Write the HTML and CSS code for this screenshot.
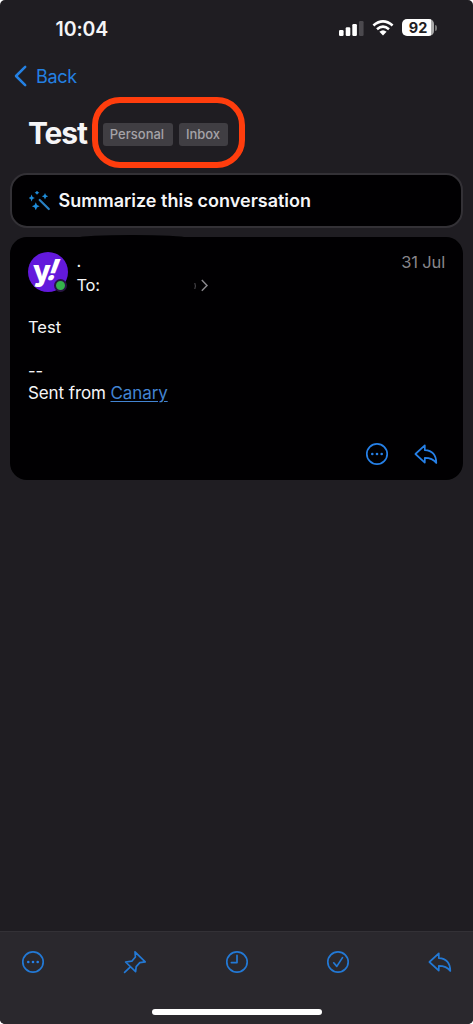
FILE: index.html
```html
<!DOCTYPE html>
<html lang="en">
<head>
<meta charset="utf-8">
<title>Test</title>
<link rel="stylesheet" href="styles.css">
</head>
<body>
<svg class="defs" width="0" height="0">
  <symbol id="more" viewBox="0 0 24 24"><circle cx="12" cy="12" r="10.2"/><g class="dots"><circle cx="7.3" cy="12" r="1.3"/><circle cx="12" cy="12" r="1.3"/><circle cx="16.7" cy="12" r="1.3"/></g></symbol>
  <symbol id="reply" viewBox="0 0 24 24"><path d="M1.4 12 10.8 3.4V8.2C18 8.6 22.2 13 22.3 21C19.5 17.2 16 15.9 10.8 15.9V20.6Z"/></symbol>
  <symbol id="pin" viewBox="0 0 24 24"><path d="M12 1.8 22.2 11.8 16.8 12.6 13.2 16.6 12.6 21.6 2.6 12 8.8 11.2 12.4 7ZM7.4 16.8 1.6 22.4"/></symbol>
  <symbol id="clock" viewBox="0 0 24 24"><circle cx="12" cy="12" r="10.2"/><path d="M12 5.4V12.6H6.4"/></symbol>
  <symbol id="check" viewBox="0 0 24 24"><circle cx="12" cy="12" r="10.2"/><path d="M7.7 12.8 10.8 16.4 16.5 7.6"/></symbol>
</svg>
<div class="phone">
  <header class="status">
    <span class="time">10:04</span>
    <div class="indicators">
      <svg class="signal" width="25" height="16" viewBox="0 0 25 16"><rect x="0" y="10" width="4.6" height="6" rx="1.2"/><rect x="6.7" y="7.3" width="4.6" height="8.7" rx="1.2"/><rect x="13.3" y="4" width="4.6" height="12" rx="1.2"/><rect class="dim" x="20" y="1" width="4.6" height="15" rx="1.2"/></svg>
      <svg class="wifi" width="22" height="16" viewBox="0 0 22 16"><path class="arc" d="M1.4 5.5Q11-2.7 20.6 5.5M5 9.2Q11 4 17 9.2"/><path class="core" d="M7.4 11.7Q11 8.7 14.6 11.7L11 15.4Z"/></svg>
      <div class="battery"><span class="level">92</span><span class="cap"></span></div>
    </div>
  </header>
  <nav class="back">
    <svg width="13" height="22" viewBox="0 0 13 22"><path d="M11.2 1.8 2 11 11.2 20.2"/></svg>
    <span>Back</span>
  </nav>
  <section class="heading">
    <h1>Test</h1>
    <div class="labels"><span class="tag personal">Personal</span><span class="tag inbox">Inbox</span></div>
  </section>
  <button class="summary">
    <svg width="22" height="20" viewBox="0 0 22 20"><path class="wand" d="M10.7 9 19.8 18"/><path class="spark" d="M2.6 3.5 3.6 6 5.8 7 3.6 8 2.6 10.5 1.6 8-.4 7 1.6 6ZM8-.3 9 1 10.4 1.7 9 2.5 8 3.7 7 2.5 5.6 1.7 7 1ZM16 2 17 4.2 19.2 5.2 17 6.2 16 8.4 15 6.2 12.8 5.2 15 4.2ZM6.8 11.2 8 14 10.6 15.2 8 16.4 6.8 19.3 5.6 16.4 2.9 15.2 5.6 14Z"/></svg>
    <span>Summarize this conversation</span>
  </button>
  <article class="message">
    <span class="bump"></span>
    <div class="sender">
      <div class="avatar"><span class="logo-y">y</span><span class="logo-mark">!</span><span class="presence"></span></div>
      <div class="names">
        <span class="from">.</span>
        <div class="to"><span>To:</span><svg width="17" height="13" viewBox="0 0 17 13"><path class="trace" d="M1.8 4Q3 7 1.8 10"/><path d="M8.8 1 14 6.4 8.8 11.8"/></svg></div>
      </div>
      <time>31 Jul</time>
    </div>
    <div class="body"><p>Test</p><p class="sign">--</p><p class="sent">Sent from <a>Canary</a></p></div>
    <div class="actions"><svg class="icon"><use href="#more"/></svg><svg class="icon"><use href="#reply"/></svg></div>
  </article>
  <footer class="toolbar">
    <div class="tools"><svg class="icon"><use href="#more"/></svg><svg class="icon"><use href="#pin"/></svg><svg class="icon"><use href="#clock"/></svg><svg class="icon"><use href="#check"/></svg><svg class="icon"><use href="#reply"/></svg></div>
    <div class="home"></div>
  </footer>
</div>
</body>
</html>
```
FILE: styles.css
```css
* { box-sizing: border-box; }
body { margin: 0; background: #fff; font-family: Inter, "Liberation Sans", sans-serif; color: #f5f5f7; }
svg { display: block; fill: none; flex: none; }
h1, p { margin: 0; }
.defs { position: absolute; }
.phone { width: 473px; height: 1024px; display: flex; flex-direction: column; background: #1f1d22; border-radius: 5px; overflow: hidden; }
.status { height: 56px; display: flex; justify-content: space-between; padding: 0 36px 0 55.5px; }
.time { margin-top: 17px; font-size: 19.5px; line-height: 24px; font-weight: 600; letter-spacing: -.1px; }
.indicators { display: flex; align-items: flex-start; padding-top: 19px; }
.signal { fill: #fff; margin: 1px 8px 0 0; }
.signal .dim { fill: #4b494e; }
.wifi { margin: 1px 8px 0 0; }
.arc { stroke: #fff; stroke-width: 2.6; }
.core { fill: #fff; }
.battery { display: flex; align-items: center; }
.level { width: 32px; height: 17px; border-radius: 5px; background: linear-gradient(90deg, #fff 91%, #aaa 91%); color: #1f1d22; font-size: 14.5px; line-height: 17px; font-weight: 700; text-align: center; }
.cap { width: 2px; height: 6px; margin-left: 1px; border-radius: 0 2px 2px 0; background: #777; }
.back { height: 40px; display: flex; align-items: center; gap: 9px; padding-left: 14px; color: #2480e2; font-size: 18px; letter-spacing: -.3px; }
.back svg { stroke: currentColor; stroke-width: 2.5; stroke-linecap: round; stroke-linejoin: round; }
.heading { height: 77px; display: flex; align-items: flex-start; padding-left: 28px; }
h1 { width: 64px; margin-top: 18px; font-size: 30px; line-height: 38px; font-weight: 700; letter-spacing: -1.1px; }
.labels { width: 153px; height: 71px; margin-top: 1px; padding: 20px 0 0 5px; border: 6px solid #ff3d0d; border-radius: 28px; display: flex; gap: 6px; align-items: flex-start; }
.tag { height: 23px; border-radius: 3px; background: #403e43; color: #a5a3a8; font-size: 13px; line-height: 23px; font-weight: 500; text-align: center; letter-spacing: 0; }
.personal { width: 70px; padding-right: 2px; }
.inbox { width: 49px; padding-right: 1px; }
.summary { width: 453px; height: 55px; margin: 0 0 0 10px; padding: 1px 17px 0; display: flex; align-items: center; gap: 7.5px; border: 2px solid #333136; border-radius: 17px; background: #010002; color: #f5f5f7; font: 600 18px/24px Inter, "Liberation Sans", sans-serif; letter-spacing: 0; }
.wand { stroke: #287fc1; stroke-width: 2.2; stroke-linecap: round; }
.spark { fill: #1f8dda; }
.message { position: relative; width: 453px; height: 243px; margin: 9px 0 0 10px; padding: 15px 18px 0; border-radius: 17px; background: #010002; display: flex; flex-direction: column; }
.bump { position: absolute; left: 69px; top: -2px; width: 106px; height: 5px; border-radius: 50% 50% 0 0; background: #010002; }
.sender { display: flex; height: 60px; }
.avatar { position: relative; width: 40px; height: 40px; border-radius: 50%; background: #6319dc; display: flex; padding-left: 5px; line-height: 37px; font-weight: 800; color: #fff; }
.logo-y { font-size: 29px; letter-spacing: -1px; }
.logo-mark { font-size: 29px; line-height: 35px; transform: skewX(-20deg); margin-left: -2px; }
.presence { position: absolute; left: 26px; top: 27px; width: 13px; height: 13px; border-radius: 50%; border: 2px solid #281443; background: #35b24b; }
.names { margin-left: 8.5px; flex: 1; font-size: 16.5px; }
.from { display: block; height: 21px; line-height: 19px; }
.to { display: flex; align-items: center; height: 23px; letter-spacing: -.3px; }
.to span { width: 116.5px; }
.to svg { margin-top: 2px; stroke: #88868b; stroke-width: 1.5; }
.to .trace { stroke: #4f4d52; stroke-width: 1; }
time { color: #87858a; font-size: 16.5px; line-height: 20px; letter-spacing: -.15px; }
.body { font-size: 16.5px; line-height: 22px; padding-top: 4px; }
.body .sign { margin-top: 22px; }
.sent { font-size: 17px; letter-spacing: -.1px; }
.body a { color: #4384d2; text-decoration: underline; text-underline-offset: 2px; }
.actions { display: flex; justify-content: flex-end; gap: 25px; margin-top: 38px; padding-right: 7px; }
.icon { width: 24px; height: 24px; stroke: #2680e8; stroke-width: 1.7; stroke-linejoin: round; stroke-linecap: round; }
.dots circle { fill: #2680e8; stroke: none; }
.toolbar { height: 93px; margin-top: auto; border-top: 1px solid #333136; background: #2a282d; }
.tools { display: flex; justify-content: space-between; padding: 18px 21px 0; }
.tools .icon { stroke: #2379d5; }
.tools .dots circle { fill: #2379d5; }
.home { width: 170px; height: 6px; margin: 35px auto 0; border-radius: 3px; background: #fff; }
```
